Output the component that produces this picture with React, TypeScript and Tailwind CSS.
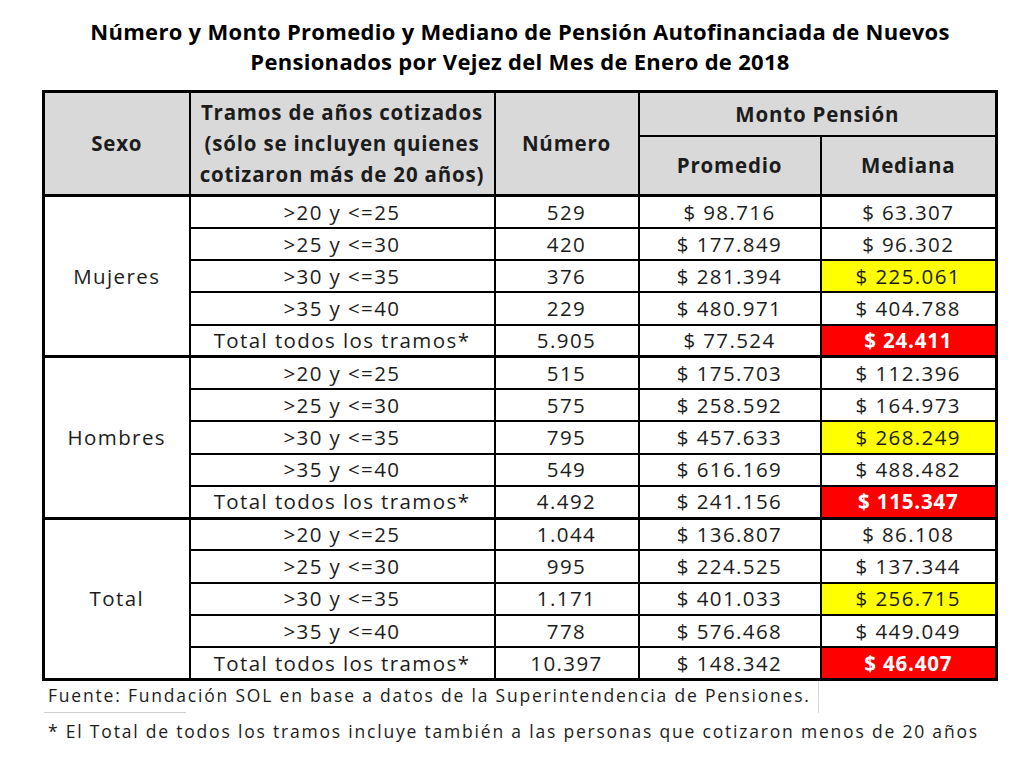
type Row = { tramo: string; numero: string; promedio: string; mediana: string; mark?: "yellow" | "red" }

const groups: { sexo: string; rows: Row[] }[] = [
  {
    sexo: "Mujeres",
    rows: [
      { tramo: ">20 y <=25", numero: "529", promedio: "$ 98.716", mediana: "$ 63.307" },
      { tramo: ">25 y <=30", numero: "420", promedio: "$ 177.849", mediana: "$ 96.302" },
      { tramo: ">30 y <=35", numero: "376", promedio: "$ 281.394", mediana: "$ 225.061", mark: "yellow" },
      { tramo: ">35 y <=40", numero: "229", promedio: "$ 480.971", mediana: "$ 404.788" },
      { tramo: "Total todos los tramos*", numero: "5.905", promedio: "$ 77.524", mediana: "$ 24.411", mark: "red" },
    ],
  },
  {
    sexo: "Hombres",
    rows: [
      { tramo: ">20 y <=25", numero: "515", promedio: "$ 175.703", mediana: "$ 112.396" },
      { tramo: ">25 y <=30", numero: "575", promedio: "$ 258.592", mediana: "$ 164.973" },
      { tramo: ">30 y <=35", numero: "795", promedio: "$ 457.633", mediana: "$ 268.249", mark: "yellow" },
      { tramo: ">35 y <=40", numero: "549", promedio: "$ 616.169", mediana: "$ 488.482" },
      { tramo: "Total todos los tramos*", numero: "4.492", promedio: "$ 241.156", mediana: "$ 115.347", mark: "red" },
    ],
  },
  {
    sexo: "Total",
    rows: [
      { tramo: ">20 y <=25", numero: "1.044", promedio: "$ 136.807", mediana: "$ 86.108" },
      { tramo: ">25 y <=30", numero: "995", promedio: "$ 224.525", mediana: "$ 137.344" },
      { tramo: ">30 y <=35", numero: "1.171", promedio: "$ 401.033", mediana: "$ 256.715", mark: "yellow" },
      { tramo: ">35 y <=40", numero: "778", promedio: "$ 576.468", mediana: "$ 449.049" },
      { tramo: "Total todos los tramos*", numero: "10.397", promedio: "$ 148.342", mediana: "$ 46.407", mark: "red" },
    ],
  },
]

const cell = "border-2 border-black text-center align-middle p-0 whitespace-nowrap"
const head =
  "border-2 border-black bg-[#d9d9d9] text-center align-middle p-0 font-bold whitespace-nowrap tracking-[0.8px]"

export default function App() {
  return (
    <div className="h-[768px] w-[1024px] bg-white text-[#1c1c1c] [font-family:'Open_Sans',sans-serif]">
      <div className="pt-[16px] pl-[16px] text-center text-[22px] font-bold leading-[30px] tracking-[0.3px] text-black">
        <div>Número y Monto Promedio y Mediano de Pensión Autofinanciada de Nuevos</div>
        <div>Pensionados por Vejez del Mes de Enero de 2018</div>
      </div>

      <table className="ml-[42px] mt-[14px] w-[953px] table-fixed border-collapse border-[3px] border-black text-[20.5px] leading-none tracking-[1.4px]">
        <colgroup>
          <col className="w-[146px]" />
          <col className="w-[305px]" />
          <col className="w-[144px]" />
          <col className="w-[182px]" />
          <col className="w-[176px]" />
        </colgroup>
        <thead>
          <tr className="h-[44px]">
            <th rowSpan={2} className={`${head} border-b-[3px]`}>Sexo</th>
            <th rowSpan={2} className={`${head} border-b-[3px] leading-[31px]`}>
              Tramos de años cotizados
              <br />
              (sólo se incluyen quienes
              <br />
              cotizaron más de 20 años)
            </th>
            <th rowSpan={2} className={`${head} border-b-[3px]`}>Número</th>
            <th colSpan={2} className={head}>Monto Pensión</th>
          </tr>
          <tr className="h-[60px]">
            <th className={`${head} border-b-[3px]`}>Promedio</th>
            <th className={`${head} border-b-[3px]`}>Mediana</th>
          </tr>
        </thead>
        <tbody>
          {groups.map((g) =>
            g.rows.map((r, i) => {
              const top = i === 0 ? "border-t-[3px]" : ""
              const med =
                r.mark === "yellow"
                  ? "bg-[#ffff00]"
                  : r.mark === "red"
                    ? "bg-[#ff0000] font-bold text-white tracking-[0.8px]"
                    : ""
              return (
                <tr key={g.sexo + i} className="h-[32.25px]">
                  {i === 0 && (
                    <td rowSpan={5} className={`${cell} ${top}`}>
                      {g.sexo}
                    </td>
                  )}
                  <td className={`${cell} ${top}`}>{r.tramo}</td>
                  <td className={`${cell} ${top}`}>{r.numero}</td>
                  <td className={`${cell} ${top}`}>{r.promedio}</td>
                  <td className={`${cell} ${top} ${med}`}>{r.mediana}</td>
                </tr>
              )
            })
          )}
        </tbody>
      </table>

      <div className="relative ml-[48px] text-[17.5px] tracking-[1.8px] text-[#1c1c1c]">
        <div className="flex h-[28px] items-center whitespace-nowrap">
          Fuente: Fundación SOL en base a datos de la Superintendencia de Pensiones.
        </div>
        <div className="absolute left-[-4px] top-[31px] h-px w-[142px] bg-[#d0d0d0]" />
        <div className="absolute left-[770px] top-0 h-[32px] w-px bg-[#d8d8d8]" />
        <div className="flex h-[44px] items-center whitespace-nowrap">
          * El Total de todos los tramos incluye también a las personas que cotizaron menos de 20 años
        </div>
      </div>
    </div>
  )
}
